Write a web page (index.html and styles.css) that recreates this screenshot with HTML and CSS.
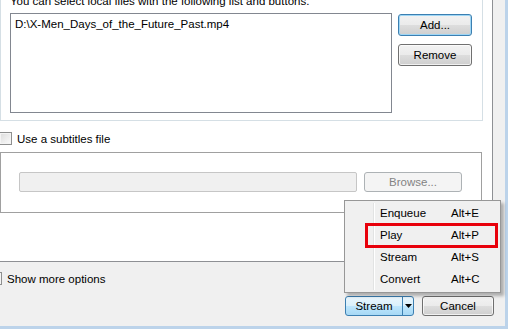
FILE: index.html
```html
<!DOCTYPE html>
<html>
<head>
<meta charset="utf-8">
<link rel="stylesheet" href="styles.css">
</head>
<body>
<div class="dialog">
  <div class="page">
    <div class="group files">
      <div class="hint">You can select local files with the following list and buttons.</div>
      <div class="filerow">
        <div class="listbox"><div class="item">D:\X-Men_Days_of_the_Future_Past.mp4</div></div>
        <div class="side">
          <div class="btn default">Add...</div>
          <div class="btn">Remove</div>
        </div>
      </div>
    </div>
    <div class="check sub"><span class="box"></span><span>Use a subtitles file</span></div>
    <div class="group subs">
      <div class="subfield"></div>
      <div class="btn disabled browse">Browse...</div>
    </div>
  </div>
  <div class="footer">
    <div class="check more"><span class="box"></span><span>Show more options</span></div>
    <div class="actions">
      <div class="split">
        <span class="split-main">Stream</span>
        <span class="split-arrow"><svg width="7" height="4" viewBox="0 0 7 4"><path d="M0 0H7L3.5 4Z" fill="#000"/></svg></span>
      </div>
      <div class="btn cancel">Cancel</div>
    </div>
  </div>
  <div class="menu">
    <div class="menu-item"><span class="mi-label">Enqueue</span><span class="mi-key">Alt+E</span></div>
    <div class="menu-item"><span class="mi-label">Play</span><span class="mi-key">Alt+P</span></div>
    <div class="menu-item"><span class="mi-label">Stream</span><span class="mi-key">Alt+S</span></div>
    <div class="menu-item"><span class="mi-label">Convert</span><span class="mi-key">Alt+C</span></div>
  </div>
  <div class="highlight"></div>
</div>
</body>
</html>
```

FILE: styles.css
```css
html, body {
  margin: 0;
  padding: 0;
}
body {
  width: 508px;
  height: 329px;
  overflow: hidden;
  background: #bcd3ea;
  font-family: "Liberation Sans", Arial, sans-serif;
  font-size: 11.5px;
  color: #000;
}
.dialog {
  position: relative;
  width: 505px;
  height: 326px;
  background: #f0f0f0;
  display: flex;
  flex-direction: column;
}
.page {
  width: 492px;
  height: 261px;
  background: #fff;
  border-right: 1px solid #8e9094;
  border-bottom: 1px solid #8e9094;
  overflow: hidden;
  display: flex;
  flex-direction: column;
}
.group {
  box-sizing: border-box;
}
.files {
  width: 483px;
  margin-top: -20px;
  border: 1px solid #d5dfe5;
  padding: 0 0 7px 9px;
}
.hint {
  height: 15px;
  line-height: 15px;
  margin-top: 13px;
  margin-bottom: 4px;
  white-space: nowrap;
}
.filerow {
  display: flex;
  align-items: flex-start;
}
.listbox {
  box-sizing: border-box;
  width: 382px;
  height: 100px;
  border: 1px solid #828790;
  padding: 3px 4px;
}
.item {
  line-height: 15px;
  white-space: nowrap;
}
.side {
  margin-left: 6px;
  margin-top: 1px;
  display: flex;
  flex-direction: column;
  gap: 8px;
}
.btn {
  box-sizing: border-box;
  width: 74px;
  height: 22px;
  border: 1px solid #707070;
  border-radius: 3px;
  background: linear-gradient(#f2f2f2 0%, #ebebeb 50%, #dddddd 51%, #cfcfcf 100%);
  box-shadow: inset 0 0 0 1px rgba(255,255,255,0.7);
  display: flex;
  align-items: center;
  justify-content: center;
}
.btn.default {
  border-color: #3c7fb1;
  box-shadow: inset 0 0 0 1px #9ed6f5;
}
.check {
  display: flex;
  align-items: center;
  height: 15px;
}
.box {
  box-sizing: border-box;
  width: 13px;
  height: 13px;
  border: 1px solid #8e8f8f;
  background: linear-gradient(135deg, #dcdcdc, #fbfbfb);
  box-shadow: inset 0 0 0 1px #f4f4f4;
  flex: none;
}
.sub {
  margin-top: 10px;
  margin-left: -1px;
}
.sub .box {
  margin-right: 5px;
}
.subs {
  margin-top: 6px;
  width: 482px;
  height: 61px;
  border: 1px solid #a0a0a0;
  padding: 19px 19px 0 18px;
  display: flex;
  gap: 7px;
}
.subfield {
  box-sizing: border-box;
  width: 338px;
  height: 20px;
  border: 1px solid #c6c6c6;
  border-radius: 2px;
  background: #f0f0f0;
}
.btn.disabled {
  border-color: #adb2b5;
  background: #f4f4f4;
  color: #838383;
  box-shadow: none;
}
.browse {
  width: 98px;
  height: 20px;
}
.footer {
  flex: 1;
  display: flex;
  flex-direction: column;
}
.more {
  margin-top: 9px;
  margin-left: -11px;
}
.more .box {
  margin-right: 5px;
}
.actions {
  margin-top: 10px;
  margin-left: 345px;
  display: flex;
  gap: 8px;
}
.split {
  box-sizing: border-box;
  width: 69px;
  height: 20px;
  border: 1px solid #3c7fb1;
  border-radius: 3px;
  background: linear-gradient(#eaf6fd 0%, #d9f0fc 50%, #bee6fd 51%, #a7d9f5 100%);
  display: flex;
}
.split-main {
  width: 56px;
  display: flex;
  align-items: center;
  justify-content: center;
  border-right: 1px solid #3c7fb1;
}
.split-arrow {
  flex: 1;
  display: flex;
  align-items: center;
  justify-content: center;
}
.cancel {
  width: 72px;
  height: 20px;
}
.menu {
  position: absolute;
  left: 344px;
  top: 200px;
  box-sizing: border-box;
  width: 157px;
  height: 93px;
  border: 1px solid #979797;
  background: #f0f0f0;
  box-shadow: 3px 3px 3px rgba(0,0,0,0.28);
  padding: 1px 2px;
}
.menu::before {
  content: "";
  position: absolute;
  left: 28px;
  top: 2px;
  bottom: 2px;
  width: 1px;
  background: #e2e3e3;
  border-right: 1px solid #ffffff;
}
.menu-item {
  height: 22px;
  display: flex;
  align-items: center;
}
.mi-label {
  margin-left: 33px;
  width: 71px;
}
.highlight {
  position: absolute;
  left: 365px;
  top: 223px;
  width: 127px;
  height: 19px;
  border: 3px solid #e8000b;
}
```
